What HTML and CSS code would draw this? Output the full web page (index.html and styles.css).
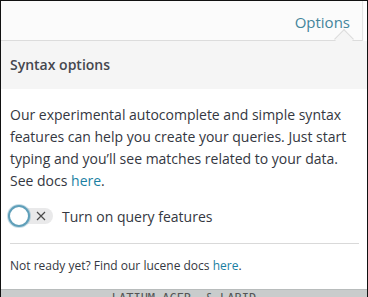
FILE: index.html
```html
<!DOCTYPE html>
<html lang="en">
<head>
    <meta charset="UTF-8">
    <meta name="viewport" content="width=device-width, initial-scale=1.0">
    <title>Syntax options</title>
    <link rel="stylesheet" href="styles.css">
</head>
<body>
    <div class="frame">
        <div class="topbar">
            <a class="options-link" href="#">Options</a>
        </div>

        <div class="popover">
            <div class="caret"></div>
            <div class="popover-title">Syntax options</div>
            <div class="popover-body">
                <p class="intro">Our experimental autocomplete and simple syntax features can help you create your queries. Just start typing and you’ll see matches related to your data. See docs <a href="#">here</a>.</p>

                <label class="switch-row">
                    <span class="switch">
                        <span class="switch-thumb"></span>
                        <svg class="switch-x" width="10" height="10" viewBox="0 0 10 10">
                            <path d="M1 1 L9 9 M9 1 L1 9" stroke="#4a4a4a" stroke-width="1.2" fill="none"/>
                        </svg>
                    </span>
                    <span class="switch-label">Turn on query features</span>
                </label>

                <hr class="divider">

                <p class="footnote">Not ready yet? Find our lucene docs <a href="#">here</a>.</p>
            </div>
        </div>

        <div class="under">LATIUM ACER, &amp; LABID</div>
    </div>
</body>
</html>
```

FILE: styles.css
```css
* { margin: 0; padding: 0; box-sizing: border-box; }
body { font-family: "Open Sans", "Noto Sans", sans-serif; background: #fff; color: #343741; }
a { color: #1a7fa3; text-decoration: none; }

.frame { width: 368px; height: 297px; border: 1px solid #111; border-bottom: none; display: flex; flex-direction: column; overflow: hidden; }

.topbar { height: 40px; margin-right: 4px; background: #fbfbfb; border-right: 1px solid #e4e4e4; border-bottom: 1px solid #dcdcdc; display: flex; justify-content: flex-end; align-items: center; padding-right: 12px; padding-top: 2px; box-shadow: 0 1px 2px rgba(0,0,0,0.06); }
.options-link { font-size: 15px; color: #44859c; }

.popover { position: relative; flex: 1; background: #fff; }
.caret { position: absolute; top: -9px; right: 16px; width: 14px; height: 14px; background: #f5f5f5; border-top: 1px solid #dcdcdc; border-left: 1px solid #dcdcdc; transform: rotate(45deg); }
.popover-title { height: 48px; background: #f5f5f5; padding: 14px 9px 0; font-size: 14px; font-weight: 600; color: #45474e; }

.popover-body { padding: 15px 8px 0 9px; }
.intro { font-size: 14px; line-height: 22px; }

.switch-row { display: flex; align-items: center; gap: 9px; margin-top: 13px; height: 22px; }
.switch { position: relative; width: 35px; height: 16px; margin-left: 8px; border-radius: 8px; background: #e9e9ea; }
.switch-thumb { position: absolute; left: -10px; top: -3px; width: 22px; height: 22px; border-radius: 50%; background: #fff; border: 2px solid #5f9fb9; box-shadow: 0 0 0 1px rgba(95,159,185,0.35); }
.switch-x { position: absolute; left: 18px; top: 3px; }
.switch-label { font-size: 14px; }

.divider { border: none; border-top: 1px solid #d9d9d9; margin: 16px 0 0; }
.footnote { font-size: 12px; line-height: 18px; margin-top: 13px; }

.under { height: 8px; margin-top: auto; background: #c9cccc; border-top: 1px solid #b8bcbc; font-family: "DejaVu Sans Mono", monospace; font-size: 12px; line-height: 12px; color: #555; text-align: center; overflow: hidden; padding-top: 2px; }
```
